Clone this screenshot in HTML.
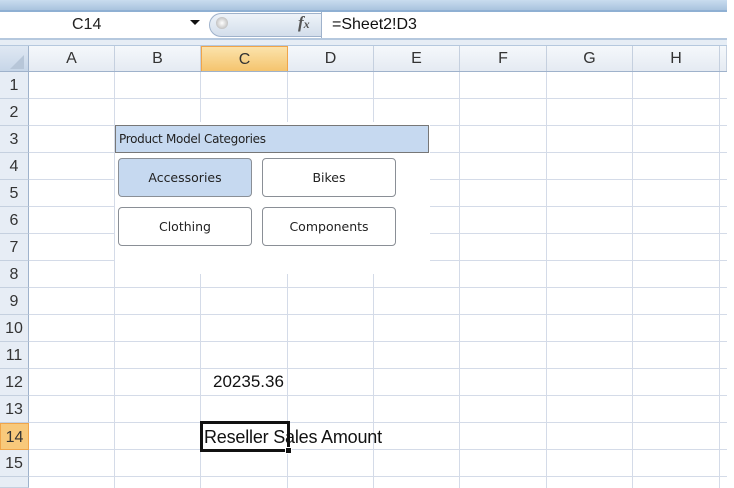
<!DOCTYPE html>
<html style="overflow:hidden;width:734px;height:488px"><head><style>
*{margin:0;padding:0;box-sizing:border-box}
body{width:734px;height:488px;background:#fff;position:relative;overflow:hidden;font-family:"Liberation Sans","DejaVu Sans",sans-serif}
.a{position:absolute}
.vl{position:absolute;top:72px;width:1px;height:416px;background:#d4dbe8}
.hl{position:absolute;left:29px;width:698px;height:1px;background:#d4dbe8}
.ch{position:absolute;top:46px;height:26px;font-size:16px;color:#333;text-align:center;line-height:26px;border-right:1px solid #c5d0df;background:linear-gradient(#f5f8fb,#e4eaf2)}
.rh{position:absolute;left:0;width:29px;height:27px;font-size:16px;color:#333;text-align:center;line-height:27px;background:#e7edf5;border-bottom:1px solid #c5d0df;border-right:1px solid #9fb2cb}
.btn{position:absolute;width:134px;height:39px;border:1px solid #8a8f96;border-radius:4px;color:#222;text-align:center;line-height:37px;background:#fff;font-family:"DejaVu Sans",sans-serif;font-size:12.5px}
</style></head><body>
<div class="a" style="left:0;top:0;width:727px;height:10px;background:linear-gradient(#c9dcef,#a9c3de)"></div>
<div class="a" style="left:0;top:10px;width:727px;height:2px;background:#8fb0d3"></div>
<div class="a" style="left:0;top:12px;width:727px;height:26px;background:#fff"></div>
<div class="a" style="left:72px;top:16px;font-size:16px;color:#222">C14</div>
<div class="a" style="left:190px;top:20px;width:0;height:0;border-left:5px solid transparent;border-right:5px solid transparent;border-top:5px solid #111"></div>
<div class="a" style="left:209px;top:13px;width:112px;height:24px;border-radius:12px 0 0 12px;background:linear-gradient(#eef3f9,#d3deeb);border:1px solid #9fb2cb;border-right:none"></div>
<div class="a" style="left:216px;top:17px;width:12px;height:12px;border-radius:50%;background:radial-gradient(#fff,#aaa)"></div>
<div class="a" style="left:298px;top:13px;font-size:17px;font-weight:bold;font-style:italic;font-family:'Liberation Serif',serif;color:#555">f<span style="font-size:12px">x</span></div>
<div class="a" style="left:321px;top:12px;width:1px;height:26px;background:#9fb2cb"></div>
<div class="a" style="left:332px;top:16px;font-size:16px;color:#111">=Sheet2!D3</div>
<div class="a" style="left:0;top:38px;width:727px;height:2px;background:#b5c8de"></div>
<div class="a" style="left:0;top:40px;width:727px;height:6px;background:#e6edf5"></div>
<div class="a" style="left:0;top:45px;width:727px;height:1px;background:#b5c8de"></div>
<div class="a" style="left:0;top:46px;width:29px;height:26px;background:linear-gradient(#dfe8f3,#c7d6e8);border-right:1px solid #9fb2cb;border-bottom:1px solid #9fb2cb"></div>
<div class="a" style="left:10px;top:55px;width:0;height:0;border-left:14px solid transparent;border-bottom:14px solid #b7c6d8"></div>
<div class="ch" style="left:29px;width:86px">A</div>
<div class="ch" style="left:115px;width:86px">B</div>
<div class="ch" style="left:201px;width:87px;background:linear-gradient(#fbe3ab,#f5c46e);border:1px solid #f0a54a">C</div>
<div class="ch" style="left:288px;width:86px">D</div>
<div class="ch" style="left:374px;width:86px">E</div>
<div class="ch" style="left:460px;width:87px">F</div>
<div class="ch" style="left:547px;width:86px">G</div>
<div class="ch" style="left:633px;width:87px">H</div>
<div class="ch" style="left:720px;width:7px"></div>
<div class="a" style="left:0;top:71px;width:727px;height:1px;background:#9fb2cb"></div>
<div class="rh" style="top:72px">1</div><div class="rh" style="top:99px">2</div><div class="rh" style="top:126px">3</div><div class="rh" style="top:153px">4</div><div class="rh" style="top:180px">5</div><div class="rh" style="top:207px">6</div><div class="rh" style="top:234px">7</div><div class="rh" style="top:261px">8</div><div class="rh" style="top:288px">9</div><div class="rh" style="top:315px">10</div><div class="rh" style="top:342px">11</div><div class="rh" style="top:369px">12</div><div class="rh" style="top:396px">13</div><div class="rh" style="top:423px;background:#f8c97b;border:1px solid #f0a54a">14</div><div class="rh" style="top:450px">15</div><div class="rh" style="top:477px;height:11px"></div>
<div class="vl" style="left:114px"></div><div class="vl" style="left:200px"></div><div class="vl" style="left:287px"></div><div class="vl" style="left:373px"></div><div class="vl" style="left:459px"></div><div class="vl" style="left:546px"></div><div class="vl" style="left:632px"></div><div class="vl" style="left:719px"></div>
<div class="hl" style="top:98px"></div><div class="hl" style="top:125px"></div><div class="hl" style="top:152px"></div><div class="hl" style="top:179px"></div><div class="hl" style="top:206px"></div><div class="hl" style="top:233px"></div><div class="hl" style="top:260px"></div><div class="hl" style="top:287px"></div><div class="hl" style="top:314px"></div><div class="hl" style="top:341px"></div><div class="hl" style="top:368px"></div><div class="hl" style="top:395px"></div><div class="hl" style="top:422px"></div><div class="hl" style="top:449px"></div><div class="hl" style="top:476px"></div>
<div class="a" style="left:115px;top:122px;width:315px;height:152px;background:#fff"></div>
<div class="a" style="left:115px;top:125px;width:314px;height:28px;background:#c6d9f0;border:1px solid #777;font-family:'DejaVu Sans',sans-serif;font-size:12px;line-height:26px;padding-left:3px;color:#222;letter-spacing:-0.3px">Product Model Categories</div>
<div class="btn" style="left:118px;top:158px;background:#c6d9f0">Accessories</div>
<div class="btn" style="left:262px;top:158px">Bikes</div>
<div class="btn" style="left:118px;top:207px">Clothing</div>
<div class="btn" style="left:262px;top:207px">Components</div>
<div class="a" style="left:213px;top:372px;font-size:17px;color:#111">20235.36</div>
<div class="a" style="left:204px;top:427px;font-size:18px;color:#111;white-space:nowrap;letter-spacing:-0.2px">Reseller Sales Amount</div>
<div class="a" style="left:200px;top:421px;width:90px;height:31px;border:3px solid #111"></div>
<div class="a" style="left:285px;top:447px;width:7px;height:7px;background:#111;border:1px solid #fff"></div>
</body></html>
